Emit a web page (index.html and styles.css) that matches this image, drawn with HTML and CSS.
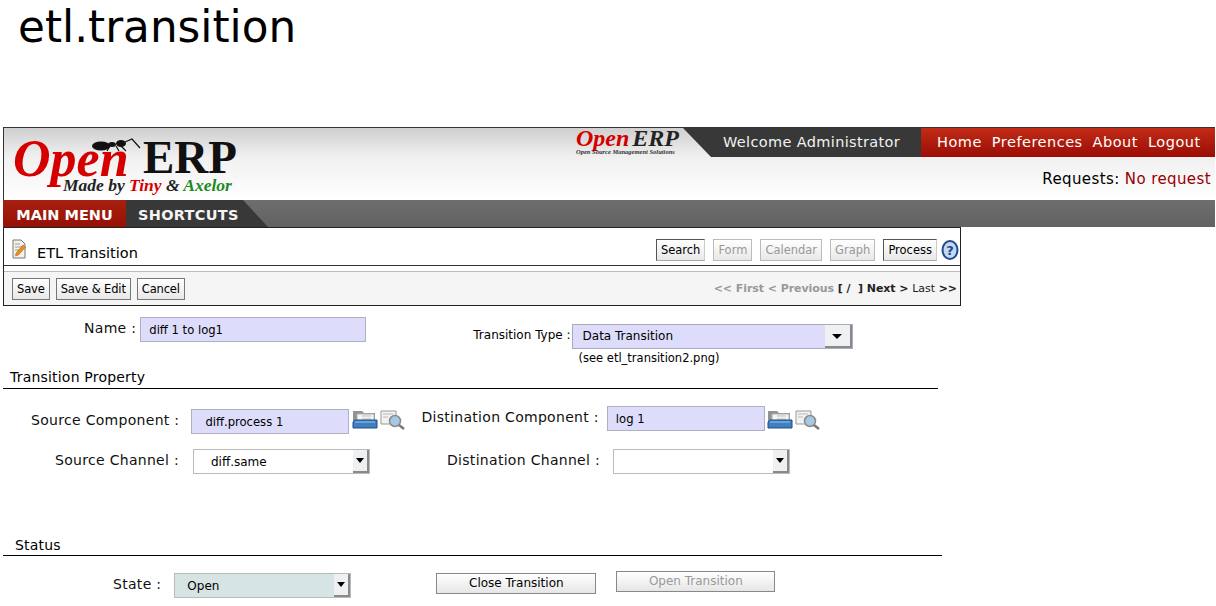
FILE: index.html
```html
<!DOCTYPE html>
<html lang="en">
<head>
    <meta charset="UTF-8">
    <title>etl.transition</title>
    <link rel="stylesheet" href="styles.css">
</head>
<body>
    <h1 class="page-title">etl.transition</h1>

    <div class="app">
        <header class="top">
            <div class="brand">
                <div class="logo">
                    <span class="logo-open">Open</span><span class="logo-erp">ERP</span>
                    <svg class="ant" viewBox="0 0 50 14">
                        <ellipse cx="9" cy="8" rx="9" ry="4.5" fill="#111"/>
                        <ellipse cx="20" cy="6.5" rx="4" ry="2.5" fill="#111"/>
                        <ellipse cx="29" cy="5.5" rx="5" ry="3.5" fill="#111"/>
                        <path d="M33 4l7-3 8 9M18 8l-3 5M24 8l3 5M29 8l5 5" fill="none" stroke="#111" stroke-width="1.2"/>
                    </svg>
                    <div class="logo-tag">Made by <span class="tag-red">Tiny</span> &amp; <span class="tag-green">Axelor</span></div>
                </div>
            </div>
            <div class="top-right">
                <div class="strip">
                    <div class="mini-logo">
                        <div class="mini-name"><span class="mini-open">Open</span><span class="mini-erp">ERP</span></div>
                        <div class="mini-sub">Open Source Management Solutions</div>
                    </div>
                    <div class="welcome">Welcome Administrator</div>
                    <nav class="links">
                        <a>Home</a><a>Preferences</a><a>About</a><a>Logout</a>
                    </nav>
                </div>
                <div class="requests">Requests: <span class="no-request">No request</span></div>
            </div>
        </header>

        <div class="menubar">
            <a class="tab-main">MAIN MENU</a>
            <a class="tab-short">SHORTCUTS</a>
        </div>

        <div class="panel">
            <div class="panel-head">
                <svg class="doc-icon" width="14" height="20" viewBox="0 0 14 20">
                    <path d="M1 1h8l4 4v14H1z" fill="#f4f2e8" stroke="#777"/>
                    <path d="M3 5h5M3 8h7M3 11h4" stroke="#999"/>
                    <path d="M4 14l7-8 2.5 2-7 8-3 1z" fill="#e8901c" stroke="#a85f08" stroke-width="0.5"/>
                </svg>
                <span class="panel-title">ETL Transition</span>
                <div class="views">
                    <button class="view">Search</button>
                    <button class="view off">Form</button>
                    <button class="view off">Calendar</button>
                    <button class="view off">Graph</button>
                    <button class="view">Process</button>
                    <svg class="help" width="18" height="20" viewBox="0 0 18 20">
                        <ellipse cx="9" cy="10" rx="7.5" ry="9" fill="#c4d8f0" stroke="#1f4a8c" stroke-width="2"/>
                        <text x="9" y="15" text-anchor="middle" class="help-mark">?</text>
                    </svg>
                </div>
            </div>
            <div class="panel-tools">
                <div class="actions">
                    <button class="act">Save</button>
                    <button class="act">Save &amp; Edit</button>
                    <button class="act">Cancel</button>
                </div>
                <div class="pager">
                    <span class="dim">&lt;&lt; First &lt; Previous</span> [ / &nbsp;] Next &gt; <span class="thin">Last</span> &gt;&gt;
                </div>
            </div>
        </div>
    </div>

    <form class="form">
        <div class="row row-name">
            <label class="lbl lbl-name">Name :</label>
            <div class="input name-input">diff 1 to log1</div>
            <label class="small-lbl">Transition Type :</label>
            <div class="type-col">
                <div class="select type-select"><span>Data Transition</span><i class="arrow"></i></div>
                <div class="note">(see etl_transition2.png)</div>
            </div>
        </div>

        <div class="section section-prop">Transition Property</div>

        <div class="row row-comp">
            <label class="lbl lbl-src">Source Component :</label>
            <div class="input comp-input src-input">diff.process 1</div>
            <svg class="ico ico-first"><use href="#folder"/></svg>
            <svg class="ico"><use href="#find"/></svg>
            <label class="lbl lbl-dst">Distination Component :</label>
            <div class="input comp-input dst-input">log 1</div>
            <svg class="ico"><use href="#folder"/></svg>
            <svg class="ico"><use href="#find"/></svg>
        </div>

        <div class="row row-chan">
            <label class="lbl lbl-srcch">Source Channel :</label>
            <div class="select chan-select"><span>diff.same</span><i class="arrow"></i></div>
            <label class="lbl lbl-dstch">Distination Channel :</label>
            <div class="select chan-select"><span></span><i class="arrow"></i></div>
        </div>

        <div class="section section-status">Status</div>

        <div class="row row-state">
            <label class="lbl lbl-state">State :</label>
            <div class="select state-select"><span>Open</span><i class="arrow"></i></div>
            <button type="button" class="wide close-btn">Close Transition</button>
            <button type="button" class="wide open-btn">Open Transition</button>
        </div>
    </form>

    <svg width="0" height="0" class="defs">
        <symbol id="folder" viewBox="0 0 26 20">
            <path d="M1 1h9l2 2h11v8H1z" fill="#8f948f"/>
            <path d="M5 4h17v9H5z" fill="#f4f4f2" stroke="#b0b0b0"/>
            <path d="M10 6h9M10 9h9" stroke="#bbb"/>
            <path d="M1 12l2-2h22v8H1z" fill="#3f7fc0" stroke="#1f4f88"/>
            <path d="M3 12h20" stroke="#9cc4ea"/>
        </symbol>
        <symbol id="find" viewBox="0 0 26 20">
            <path d="M1 1h15v13H1z" fill="#f2f2f0" stroke="#999"/>
            <path d="M3 4h10M3 7h5" stroke="#bbb"/>
            <circle cx="15" cy="11" r="5.5" fill="#a9c6e4" stroke="#8a8a8a" stroke-width="1.5"/>
            <path d="M19 15l5 4" stroke="#777" stroke-width="2.5"/>
        </symbol>
    </svg>
</body>
</html>
```

FILE: styles.css
```css
body {
    margin: 0;
    background-color: #fff;
    color: #000;
    font-family: 'DejaVu Sans', sans-serif;
    overflow: hidden;
}
button {
    font-family: 'DejaVu Sans', sans-serif;
    cursor: pointer;
}
.page-title {
    margin: 0;
    height: 127px;
    padding-left: 18px;
    font-size: 43.7px;
    font-weight: normal;
    line-height: 53px;
    box-sizing: border-box;
}
.app {
    width: 1212px;
    margin-left: 3px;
}
.defs {
    display: block;
}

/* header */
.top {
    display: flex;
    height: 73px;
    border-top: 1px solid #333;
    border-left: 1px solid #333;
    box-sizing: border-box;
    background: linear-gradient(#cfcfcf, #f0f0f0 40%, #fff);
}
.brand {
    width: 572px;
}
.logo {
    position: relative;
    width: 240px;
    height: 72px;
}
.logo-open {
    position: absolute;
    left: 9px;
    top: 0;
    font: italic bold 52px/62px 'Liberation Serif', serif;
    color: #d40000;
}
.logo-erp {
    position: absolute;
    left: 139px;
    top: 2px;
    font: bold 47px/54px 'Liberation Serif', serif;
    color: #111;
}
.ant {
    position: absolute;
    left: 88px;
    top: 10px;
    width: 50px;
    height: 14px;
}
.logo-tag {
    position: absolute;
    left: 59px;
    top: 47px;
    font: italic bold 17.5px/20px 'Liberation Serif', serif;
    color: #222;
    white-space: nowrap;
}
.tag-red {
    color: #d40000;
}
.tag-green {
    color: #1e8a1e;
}
.top-right {
    flex: 1;
}
.strip {
    display: flex;
    height: 29px;
}
.mini-logo {
    width: 107px;
}
.mini-name {
    font: italic bold 24px/20px 'Liberation Serif', serif;
    height: 20px;
    white-space: nowrap;
}
.mini-open {
    color: #d40000;
}
.mini-erp {
    color: #222;
    margin-left: 3px;
}
.mini-sub {
    font: italic bold 6.5px/7px 'Liberation Serif', serif;
    color: #333;
    white-space: nowrap;
}
.welcome {
    width: 238px;
    padding-left: 40px;
    box-sizing: border-box;
    background-color: #383838;
    clip-path: polygon(0 0, 100% 0, 100% 100%, 28px 100%);
    color: #f2f2f2;
    font-size: 14.5px;
    line-height: 29px;
    letter-spacing: 0.35px;
}
.links {
    flex: 1;
    display: flex;
    gap: 10px;
    padding-left: 16px;
    background: linear-gradient(#c22c17, #9a0c04);
    color: #fff;
    font-size: 14.5px;
    line-height: 29px;
    letter-spacing: 0.5px;
}
.requests {
    margin-top: 12px;
    padding-right: 4px;
    text-align: right;
    font-size: 15px;
    line-height: 20px;
    letter-spacing: 0.4px;
}
.no-request {
    color: #990000;
}

/* red and grey menu bar */
.menubar {
    display: flex;
    height: 27px;
    background: linear-gradient(#6e6e6e, #626262);
}
.tab-main {
    width: 123px;
    text-align: center;
    background: linear-gradient(#a8200e, #961006);
    color: #fff;
    font-size: 14.5px;
    font-weight: bold;
    line-height: 30px;
}
.tab-short {
    width: 142px;
    padding-left: 12px;
    box-sizing: border-box;
    background-color: #383838;
    clip-path: polygon(0 0, 117px 0, 100% 100%, 0 100%);
    color: #f4f4f4;
    font-size: 14.5px;
    font-weight: bold;
    line-height: 30px;
    letter-spacing: 0.3px;
}

/* panel with the view buttons */
.panel {
    width: 958px;
    height: 79px;
    box-sizing: border-box;
    border: 1px solid #222;
    background-color: #fff;
}
.panel-head {
    display: flex;
    align-items: center;
    height: 38px;
    border-bottom: 1px solid #333;
    box-sizing: border-box;
    padding-left: 8px;
}
.doc-icon {
    margin-top: 4px;
}
.panel-title {
    margin-left: 11px;
    margin-top: 12px;
    font-size: 14.5px;
    line-height: 18px;
}
.views {
    display: flex;
    align-items: center;
    gap: 8px;
    margin-left: auto;
    padding-right: 1px;
    margin-top: 7px;
}
.view {
    height: 22px;
    padding: 0 4px;
    border: 1px solid #555;
    border-right-color: #ccc;
    border-bottom-color: #aaa;
    background: linear-gradient(#fff, #e8e8e8);
    font-size: 11.5px;
    color: #000;
}
.view.off {
    border-color: #bbb;
    color: #999;
}
.help {
    margin-left: -4px;
}
.help-mark {
    font: bold 13px 'DejaVu Sans', sans-serif;
    fill: #1f4a8c;
}
.panel-tools {
    display: flex;
    align-items: center;
    justify-content: space-between;
    height: 34px;
    margin-top: 5px;
    padding: 0 3px 0 8px;
    border-top: 1px solid #bbb;
    box-sizing: border-box;
    background-color: #f5f5f5;
}
.actions {
    display: flex;
    gap: 6px;
}
.act {
    height: 22px;
    padding: 0 4px;
    border: 1px solid #777;
    background: linear-gradient(#fff, #e8e8e8);
    font-size: 11.5px;
    letter-spacing: -0.15px;
    color: #000;
}
.pager {
    font-size: 11px;
    font-weight: bold;
    letter-spacing: -0.06px;
    color: #222;
}
.pager .dim {
    color: #999;
}
.pager .thin {
    font-weight: normal;
}

/* form */
.form {
    font-size: 12px;
}
.row {
    display: flex;
    align-items: flex-start;
}
.lbl {
    font-size: 14px;
    line-height: 18px;
    letter-spacing: 0.3px;
    white-space: nowrap;
    color: #111;
}
.input, .select {
    display: flex;
    align-items: center;
    height: 25px;
    box-sizing: border-box;
    border: 1px solid #b0b0c4;
    font-size: 12px;
    white-space: nowrap;
}
.input {
    background-color: #ddddfb;
    font-size: 11.6px;
}
.select {
    justify-content: space-between;
    border-color: #bbb;
    background-color: #fff;
}
.arrow {
    position: relative;
    width: 16px;
    height: 23px;
    box-sizing: border-box;
    border-right: 2px solid #8a8a8a;
    border-bottom: 2px solid #8a8a8a;
    background-color: #eef0f2;
    flex: none;
}
.arrow::after {
    content: "";
    position: absolute;
    left: 3px;
    top: 8px;
    border-top: 5px solid #000;
    border-left: 4px solid transparent;
    border-right: 4px solid transparent;
}
.row-name {
    margin-top: 11px;
    height: 51px;
}
.lbl-name {
    margin: 2px 4px 0 84px;
}
.name-input {
    width: 226px;
    padding-left: 8px;
}
.small-lbl {
    margin: 10px 1px 0 107px;
    font-size: 12px;
    line-height: 16px;
}
.type-select {
    width: 281px;
    margin-top: 7px;
    border-color: #a9a9c0;
    background-color: #ddddfb;
    padding-left: 10px;
}
.type-select span {
    padding-bottom: 2px;
}
.type-select .arrow {
    width: 27px;
}
.type-select .arrow::after {
    left: 7px;
    top: 9px;
    border-top-width: 5px;
    border-left-width: 5px;
    border-right-width: 5px;
}
.note {
    margin: 1px 0 0 7px;
    font-size: 11.5px;
    line-height: 16px;
}
.section {
    font-size: 14px;
    line-height: 18px;
    letter-spacing: 0.2px;
    border-bottom: 1px solid #000;
}
.section-prop {
    width: 928px;
    margin-left: 3px;
    padding: 0 0 2px 7px;
}
.section-status {
    width: 927px;
    margin-left: 3px;
    margin-top: 26px;
    padding: 0 0 1px 12px;
}
.row-comp {
    margin-top: 17px;
    height: 40px;
}
.lbl-src {
    margin: 5px 12px 0 31px;
}
.comp-input {
    width: 158px;
}
.src-input {
    margin-top: 3px;
    padding-left: 13px;
}
.dst-input {
    padding-left: 8px;
}
.ico {
    width: 26px;
    height: 20px;
    margin: 4px 0 0 2px;
}
.ico-first {
    margin-left: 3px;
}
.lbl-dst {
    margin: 2px 8px 0 15px;
}
.row-chan {
    height: 61px;
    margin-top: 3px;
}
.chan-select {
    width: 177px;
    padding-left: 17px;
}
.lbl-srcch {
    margin: 2px 14px 0 55px;
}
.lbl-dstch {
    margin: 2px 13px 0 77px;
}
.row-state {
    margin-top: 17px;
}
.lbl-state {
    margin: 2px 13px 0 113px;
}
.state-select {
    width: 177px;
    padding-left: 12px;
    background-color: #d6e4e4;
}
.state-select span {
    padding-top: 1px;
}
.wide {
    width: 160px;
    height: 21px;
    padding-bottom: 2px;
    border: 1px solid #888;
    background: linear-gradient(#fff, #e6e6e6);
    font-size: 12px;
    color: #000;
}
.close-btn {
    margin-left: 85px;
}
.open-btn {
    width: 159px;
    margin: -2px 0 0 20px;
    color: #999;
}
```
